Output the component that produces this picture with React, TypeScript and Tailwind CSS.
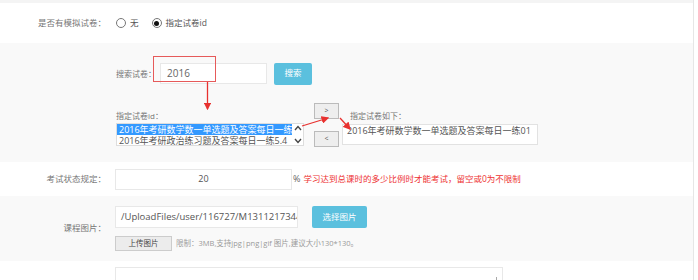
import React from "react";

const font = { fontFamily: '"Open Sans", "Noto Sans CJK SC", sans-serif' };

function Radio({ checked, label }: { checked?: boolean; label: string }) {
  return (
    <label className="flex items-center gap-[4px]">
      <span className="flex h-[10px] w-[10px] items-center justify-center rounded-full border border-[#777] bg-white">
        {checked && <span className="h-[5px] w-[5px] rounded-full bg-[#111]" />}
      </span>
      <span className="text-[8.5px] text-[#555]">{label}</span>
    </label>
  );
}

function Label({ children }: { children: React.ReactNode }) {
  return (
    <div className="w-[108px] shrink-0 pr-[2px] text-right text-[8.5px] text-[#777]">{children}</div>
  );
}

function Arrows() {
  return (
    <svg className="pointer-events-none absolute left-0 top-0" width="698" height="280">
      <defs>
        <marker id="head" markerWidth="6" markerHeight="6" refX="5" refY="3" orient="auto">
          <path d="M0,0 L6,3 L0,6 Z" fill="#e8312f" />
        </marker>
      </defs>
      <rect x="153.5" y="56.5" width="62" height="25" fill="none" stroke="#e65a5a" strokeWidth="1" />
      <line x1="207.5" y1="82" x2="207.5" y2="109" stroke="#e8312f" strokeWidth="1.3" markerEnd="url(#head)" />
      <line x1="302" y1="126" x2="328" y2="118" stroke="#e8312f" strokeWidth="1.3" markerEnd="url(#head)" />
      <line x1="340" y1="118" x2="350" y2="129" stroke="#e8312f" strokeWidth="1.3" markerEnd="url(#head)" />
    </svg>
  );
}

export default function App() {
  return (
    <div className="relative h-[280px] w-[698px] overflow-hidden bg-white" style={font}>
      <div className="w-[694px] border-r border-[#e6e6e6]">
        <div className="h-[3px] bg-[#f4f4f4]" />

        {/* mock exam */}
        <div className="flex h-[40px] items-center bg-white">
          <Label>是否有模拟试卷：</Label>
          <div className="ml-[8px] flex items-center gap-[13px]">
            <Radio label="无" />
            <Radio checked label="指定试卷id" />
          </div>
        </div>

        {/* search + pick */}
        <div className="h-[119px] bg-[#f9f9f9] pl-[116px] pt-[20px]">
          <div className="flex h-[21px] items-center">
            <span className="w-[44px] text-[8px] text-[#777]">搜索试卷：</span>
            <div className="flex h-[21px] w-[107px] items-center border border-[#e8e8e8] bg-white pl-[6px] text-[10px] text-[#666]">
              2016
            </div>
            <button className="ml-[7px] h-[22px] w-[38px] rounded-[2px] bg-[#5bc0de] text-[8.5px] text-white">搜索</button>
          </div>

          <div className="mt-[19px] flex items-start">
            <div className="w-[188px]">
              <div className="h-[20px] pt-[6px] text-[8px] leading-[14px] text-[#777]">指定试卷id：</div>
              <div className="flex h-[23px] border border-[#ddd] bg-white">
                <div className="min-w-0 flex-1 overflow-hidden whitespace-nowrap text-[9px] leading-[11px]">
                  <div className="bg-[#3399ff] pl-[2px] text-white">2016年考研数学数一单选题及答案每日一练01</div>
                  <div className="pl-[2px] text-[#555]">2016年考研政治练习题及答案每日一练5.4</div>
                </div>
                <div className="flex w-[11px] flex-col items-center justify-between py-[1px] text-[#444]">
                  <svg width="8" height="6" viewBox="0 0 8 6"><path d="M1,5 L4,1.5 L7,5" fill="none" stroke="currentColor" strokeWidth="1.4" /></svg>
                  <svg width="8" height="6" viewBox="0 0 8 6"><path d="M1,1 L4,4.5 L7,1" fill="none" stroke="currentColor" strokeWidth="1.4" /></svg>
                </div>
              </div>
            </div>

            <div className="ml-[10px] flex w-[25px] flex-col">
              <button className="h-[16px] border border-[#bbb] bg-[#eeeeee] text-[7px] text-[#555]">&gt;</button>
              <button className="mt-[12px] h-[16px] border border-[#bbb] bg-[#eeeeee] text-[7px] text-[#555]">&lt;</button>
            </div>

            <div className="ml-[3px] w-[196px]">
              <div className="h-[21px] pl-[8px] pt-[6px] text-[8px] leading-[14px] text-[#777]">指定试卷如下：</div>
              <div className="h-[21px] border border-[#e2e2e2] bg-white pl-[4px] text-[9px] leading-[12px] text-[#555]">
                2016年考研数学数一单选题及答案每日一练01
              </div>
            </div>
          </div>
        </div>

        {/* exam status */}
        <div className="flex h-[34px] items-center bg-white">
          <Label>考试状态规定：</Label>
          <div className="ml-[7px] flex h-[21px] w-[177px] items-center justify-center border border-[#e8e8e8] bg-white text-[9px] text-[#555]">
            20
          </div>
          <span className="ml-[1px] text-[9px] text-[#666]">%</span>
          <span className="ml-[3px] text-[8.5px] text-[#ee3333]">学习达到总课时的多少比例时才能考试，留空或0为不限制</span>
        </div>

        {/* course image */}
        <div className="flex h-[65px] items-center bg-[#f9f9f9]">
          <Label>课程图片：</Label>
          <div className="ml-[7px] flex flex-col">
            <div className="flex items-center">
              <div className="flex h-[22px] w-[183px] items-center overflow-hidden whitespace-nowrap border border-[#e8e8e8] bg-white pl-[5px] text-[9.5px] text-[#555]">
                /UploadFiles/user/116727/M131121734492
              </div>
              <button className="ml-[14px] h-[22px] w-[55px] rounded-[2px] bg-[#5bc0de] text-[8.5px] text-white">选择图片</button>
            </div>
            <div className="mt-[8px] flex items-center">
              <button className="h-[15px] w-[57px] border border-[#ccc] bg-[#ececec] text-[7.5px] text-[#444]">上传图片</button>
              <span className="ml-[4px] text-[7.5px] text-[#999]">限制：3MB,支持jpg|png|gif 图片,建议大小130*130。</span>
            </div>
          </div>
        </div>

        {/* description */}
        <div className="h-[19px] bg-white pl-[115px] pt-[6px]">
          <div className="relative h-[20px] w-[388px] border border-[#e8e8e8] bg-white">
            <span className="absolute right-[5px] top-[9px] h-[3px] w-[1px] bg-[#aaa]" />
          </div>
        </div>
      </div>
      <Arrows />
    </div>
  );
}
